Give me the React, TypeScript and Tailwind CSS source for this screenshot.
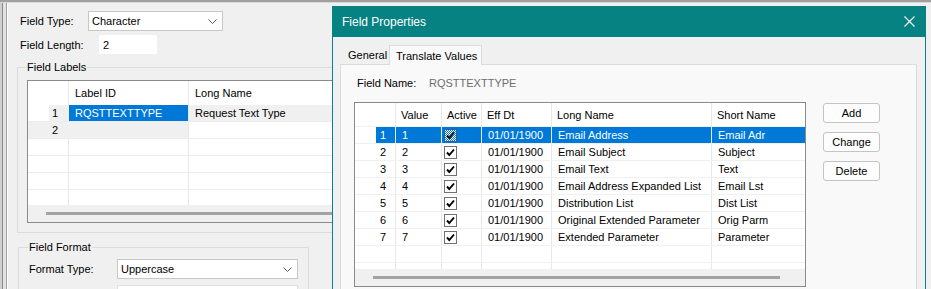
import React from "react";

type Row = { n: number; long: string; short: string };

const rows: Row[] = [
  { n: 1, long: "Email Address", short: "Email Adr" },
  { n: 2, long: "Email Subject", short: "Subject" },
  { n: 3, long: "Email Text", short: "Text" },
  { n: 4, long: "Email Address Expanded List", short: "Email Lst" },
  { n: 5, long: "Distribution List", short: "Dist List" },
  { n: 6, long: "Original Extended Parameter", short: "Orig Parm" },
  { n: 7, long: "Extended Parameter", short: "Parameter" },
];

const Chevron = () => (
  <svg width="9" height="5" viewBox="0 0 9 5" className="shrink-0">
    <path d="M0.5 0.5 L4.5 4.5 L8.5 0.5" fill="none" stroke="#5a5a5a" strokeWidth="1" />
  </svg>
);

const Check = ({ selected }: { selected?: boolean }) => (
  <div
    className={
      selected
        ? "w-[13px] h-[13px] border border-[#2b5f9e] bg-[repeating-conic-gradient(#0078d7_0_25%,#ffffff_0_50%)] bg-[length:2px_2px] flex items-center justify-center"
        : "w-[13px] h-[13px] border border-[#707070] bg-white flex items-center justify-center"
    }
  >
    <svg width="11" height="11" viewBox="0 0 11 11">
      <path d="M2 5.5 L4.3 8 L9 2.5" fill="none" stroke="#000" strokeWidth="1.9" />
    </svg>
  </div>
);

const Combo = ({ text, width }: { text: string; width: string }) => (
  <div className={`${width} h-[20px] bg-white border border-[#c8c8c8] flex items-center pl-[3px] pr-[5px] justify-between`}>
    <span>{text}</span>
    <Chevron />
  </div>
);

const TV_COLS = "grid grid-cols-[21px_20px_46px_40px_70px_160px_93px]";

const TranslateGrid = () => (
  <div className="w-[452px] h-[185px] border border-[#8a8a8a] bg-white flex flex-col overflow-hidden">
    <div className={`${TV_COLS} h-[24px] shrink-0 border-b border-[#f0f0f0]`}>
      <div />
      <div className="border-r border-[#e8e8e8]" />
      <div className="border-r border-[#e8e8e8] pl-[5px] flex items-center">Value</div>
      <div className="border-r border-[#e8e8e8] pl-[5px] flex items-center">Active</div>
      <div className="border-r border-[#e8e8e8] pl-[5px] flex items-center">Eff Dt</div>
      <div className="border-r border-[#e8e8e8] pl-[5px] flex items-center">Long Name</div>
      <div className="pl-[5px] flex items-center">Short Name</div>
    </div>
    <div className="flex-1 flex flex-col overflow-hidden">
      {rows.map((r) => {
        const sel = r.n === 1;
        const cell = sel
          ? "bg-[#0078d7] text-white border-r border-[#e8e8e8] flex items-center"
          : "border-r border-[#e8e8e8] flex items-center";
        return (
          <div key={r.n} className={`${TV_COLS} h-[17px] shrink-0 border-b border-[#f0f0f0]`}>
            <div />
            <div className={`${cell} pl-[4px]`}>{r.n}</div>
            <div className={`${cell} pl-[6px]`}>{r.n}</div>
            <div className={`${sel ? "bg-[#0078d7]" : ""} border-r border-[#e8e8e8] flex items-center pl-[2px]`}>
              <Check selected={sel} />
            </div>
            <div className={`${cell} pl-[6px]`}>01/01/1900</div>
            <div className={`${cell} pl-[6px] whitespace-nowrap overflow-hidden`}>{r.long}</div>
            <div className={`${sel ? "bg-[#0078d7] text-white" : ""} flex items-center pl-[6px]`}>{r.short}</div>
          </div>
        );
      })}
      <div className={`${TV_COLS} h-[17px] shrink-0 border-b border-[#f0f0f0]`}>
        <div />
        <div className="border-r border-[#e8e8e8]" />
        <div className="border-r border-[#e8e8e8]" />
        <div className="border-r border-[#e8e8e8]" />
        <div className="border-r border-[#e8e8e8]" />
        <div className="border-r border-[#e8e8e8]" />
        <div />
      </div>
      <div className={`${TV_COLS} flex-1`}>
        <div />
        <div className="border-r border-[#e8e8e8]" />
        <div className="border-r border-[#e8e8e8]" />
        <div className="border-r border-[#e8e8e8]" />
        <div className="border-r border-[#e8e8e8]" />
        <div className="border-r border-[#e8e8e8]" />
        <div />
      </div>
    </div>
    <div className="h-[17px] shrink-0 bg-[#f0f0f0] flex items-center pl-[18px]">
      <div className="w-[407px] h-[3px] bg-[#a3a3a3]" />
    </div>
  </div>
);

const LB_COLS = "grid grid-cols-[21px_20px_120px_1fr]";

const LabelGrid = () => (
  <div className="ml-[9px] w-[340px] h-[143px] border-l border-t border-[#8a8a8a] bg-white flex flex-col overflow-hidden">
    <div className={`${LB_COLS} h-[24px] shrink-0`}>
      <div />
      <div className="border-r border-[#e8e8e8]" />
      <div className="border-r border-[#e8e8e8] pl-[6px] flex items-center">Label ID</div>
      <div className="pl-[6px] flex items-center">Long Name</div>
    </div>
    <div className={`${LB_COLS} h-[17px] shrink-0 border-b border-[#ececec]`}>
      <div />
      <div className="bg-[#f0f0f0] flex items-center pl-[3px]">1</div>
      <div className="bg-[#0078d7] text-white flex items-center pl-[6px] border-r border-[#e8e8e8]">RQSTTEXTTYPE</div>
      <div className="bg-[#f0f0f0] flex items-center pl-[6px]">Request Text Type</div>
    </div>
    <div className={`${LB_COLS} h-[17px] shrink-0 border-b border-[#ececec]`}>
      <div className="bg-[#f0f0f0]" />
      <div className="bg-[#f0f0f0] flex items-center pl-[3px]">2</div>
      <div className="bg-[#f0f0f0] border-r border-[#e8e8e8]" />
      <div />
    </div>
    {[0, 1, 2].map((i) => (
      <div key={i} className={`${LB_COLS} h-[17px] shrink-0 border-b border-[#ececec]`}>
        <div />
        <div className="border-r border-[#e8e8e8]" />
        <div className="border-r border-[#e8e8e8]" />
        <div />
      </div>
    ))}
    <div className={`${LB_COLS} flex-1`}>
      <div />
      <div className="border-r border-[#e8e8e8]" />
      <div className="border-r border-[#e8e8e8]" />
      <div />
    </div>
    <div className="h-[18px] shrink-0 bg-[#f0f0f0] flex items-center pl-[18px] border-b border-[#8a8a8a]">
      <div className="w-[300px] h-[3px] bg-[#a3a3a3]" />
    </div>
  </div>
);

const Button = ({ label }: { label: string }) => (
  <div className="w-[57px] h-[20px] bg-[#fdfdfd] border border-[#c4c4c4] rounded-[3px] flex items-center justify-center">
    {label}
  </div>
);

const Dialog = () => (
  <div className="absolute left-[332px] top-[6px] w-[594px] h-[300px] bg-[#f0f0f0] border-x border-[#078283] flex flex-col">
    <div className="h-[31px] shrink-0 bg-[#078283] text-white flex items-center justify-between pl-[9px] pr-[10px]">
      <span className="text-[12px]">Field Properties</span>
      <svg width="11" height="11" viewBox="0 0 11 11">
        <path d="M0.5 0.5 L10.5 10.5 M10.5 0.5 L0.5 10.5" stroke="#fff" strokeWidth="1.1" />
      </svg>
    </div>
    <div className="ml-[7px] mr-[8px] flex flex-col flex-1">
      <div className="flex items-end pt-[7px] h-[27px] shrink-0 whitespace-nowrap">
        <div className="w-[49px] h-[18px] pl-[8px] flex items-center">General</div>
        <div className="w-[93px] h-[20px] -mb-px relative bg-[#f9f9f9] border border-b-0 border-[#dcdcdc] pl-[6px] flex items-center">
          Translate Values
        </div>
      </div>
      <div className="flex-1 bg-[#f9f9f9] border border-[#dcdcdc] flex flex-col">
        <div className="flex items-center pl-[16px] pt-[11px] h-[25px]">
          <span className="w-[72px]">Field Name:</span>
          <span className="text-[#6d6d6d]">RQSTTEXTTYPE</span>
        </div>
        <div className="flex mt-[12px] pl-[13px]">
          <TranslateGrid />
          <div className="ml-[17px] pt-[1px] flex flex-col gap-[9px]">
            <Button label="Add" />
            <Button label="Change" />
            <Button label="Delete" />
          </div>
        </div>
      </div>
    </div>
  </div>
);

export default function App() {
  return (
    <div className="relative w-[931px] h-[289px] overflow-hidden bg-[#f0f0f0] text-[11px] leading-[14px] text-black font-['Liberation_Sans',Arial,sans-serif]">
      <div className="h-[2px] bg-[#a0a0a0]" />
      <div className="h-[1px] bg-[#d8d8d8]" />
      <div className="flex h-[286px]">
        <div className="w-[8px] h-full flex shrink-0">
          <div className="w-[2px] bg-[#cfcfcf]" />
          <div className="w-[1px] bg-[#8a8a8a]" />
          <div className="w-[3px] bg-[#e2e2e2]" />
          <div className="w-[1px] bg-[#a0a0a0]" />
          <div className="w-[1px] bg-white" />
        </div>
        <div className="flex flex-col flex-1">
          <div className="flex items-center ml-[12px] mt-[8px] h-[20px]">
            <span className="w-[68px]">Field Type:</span>
            <Combo text="Character" width="w-[135px]" />
          </div>
          <div className="flex items-center ml-[12px] mt-[4px] h-[19px]">
            <span className="w-[79px]">Field Length:</span>
            <div className="w-[58px] h-[19px] bg-white flex items-center pl-[4px]">2</div>
          </div>
          <fieldset className="ml-[9px] mt-[6px] w-[360px] border border-[#dcdcdc] pb-[9px]">
            <legend className="ml-[8px] px-[1px] leading-[14px]">Field Labels</legend>
            <div className="mt-[6px]">
              <LabelGrid />
            </div>
          </fieldset>
          <fieldset className="ml-[10px] mt-[7px] w-[291px] h-[80px] border border-[#dcdcdc]">
            <legend className="ml-[9px] px-[1px] leading-[14px]">Field Format</legend>
            <div className="flex items-center ml-[10px] mt-[5px]">
              <span className="w-[88px]">Format Type:</span>
              <Combo text="Uppercase" width="w-[181px]" />
            </div>
            <div className="ml-[98px] mt-[6px] w-[181px] h-[20px] bg-white border border-[#e0e0e0]" />
          </fieldset>
        </div>
      </div>
      <Dialog />
    </div>
  );
}
